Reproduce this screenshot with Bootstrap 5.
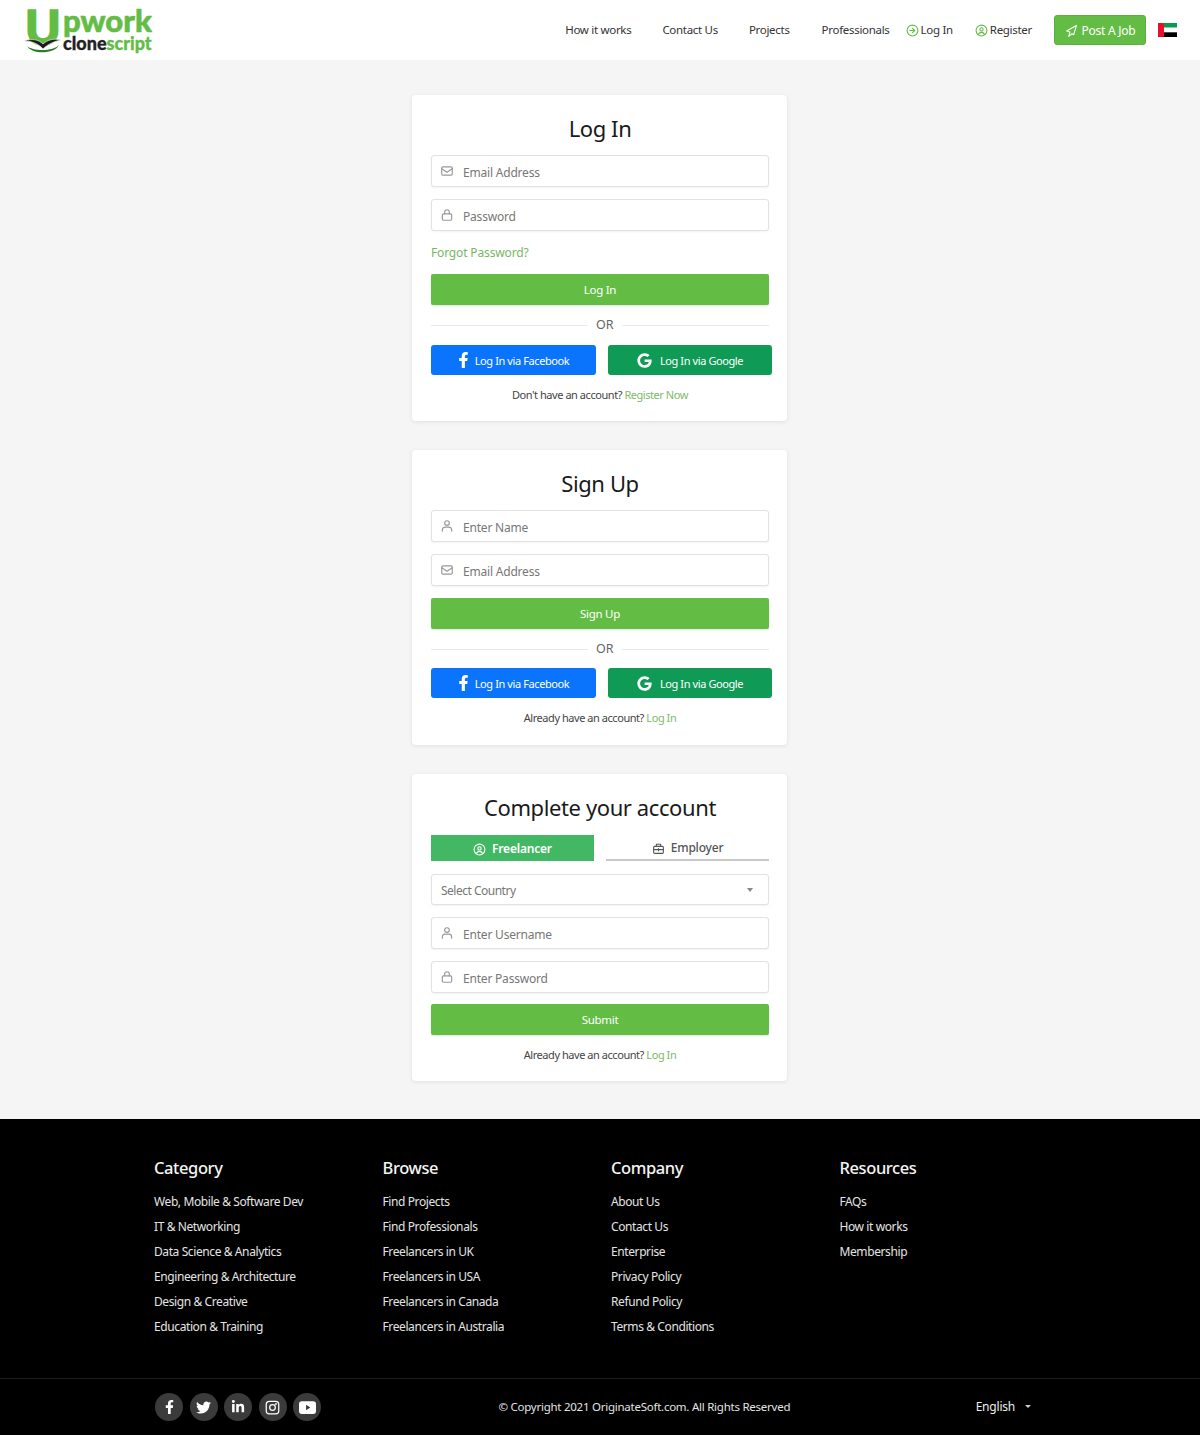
<!DOCTYPE html>
<html lang="en">
<head>
    <meta charset="UTF-8">
    <meta name="viewport" content="width=device-width, initial-scale=1.0">
    <title>Upwork Clone Script</title>
    <link href="https://cdn.jsdelivr.net/npm/bootstrap@5.3.0/dist/css/bootstrap.min.css" rel="stylesheet">
    <style>
        body { background: #f5f5f5; font-family: "Noto Sans", "Liberation Sans", sans-serif; color: #222; }
        svg.ico { fill: none; stroke: currentColor; stroke-width: 2; stroke-linecap: round; stroke-linejoin: round; flex-shrink: 0; }
        svg.solid { fill: currentColor; flex-shrink: 0; }

        /* header */
        .top-bar { height: 60px; background: #fff; padding: 0 23px 0 25px; }
        .brand-box { position: relative; width: 130px; height: 60px; display: block; text-decoration: none; }
        .brand-u { position: absolute; left: 0; top: 6px; font: 900 48px/42px Lato, sans-serif; color: #63bd45; -webkit-text-stroke: 1.5px #63bd45; }
        .brand-work { position: absolute; left: 38px; top: 7px; font: 900 31px/26px Lato, sans-serif; color: #63bd45; -webkit-text-stroke: .6px #63bd45; }
        .brand-clone { position: absolute; left: 38px; top: 34px; font: 900 18px/18px Lato, sans-serif; color: #222; -webkit-text-stroke: .3px #222; }
        .brand-clone em { font-style: normal; color: #63bd45; -webkit-text-stroke-color: #63bd45; }
        .brand-swoosh { position: absolute; left: -1px; top: 38px; }
        .top-links { font-size: 11.5px; letter-spacing: -.3px; color: #333; }
        .top-links a { color: #333; text-decoration: none; }
        .top-links .ico { color: #63bd45; }
        .icon-link-item { gap: 2px; }
        .post-btn { background: #63bd45; border: 1px solid #5bb13f; color: #fff; font-size: 12px; letter-spacing: -.25px; width: 92px; height: 30px; padding: 2px 0 0; border-radius: 3px; margin-left: 22px; margin-right: 12px; }
        .post-btn:hover { background: #63bd45; color: #fff; }

        /* cards */
        .page-main { padding: 35px 0 38px; }
        .form-box { width: 375px; margin: 0 0 29px 412px; background: #fff; border-radius: 4px; padding: 19px 18px 18px 19px; box-shadow: 0 1px 4px rgba(0,0,0,.09); }
        .form-box:last-child { margin-bottom: 0; }
        .form-box h2 { font-size: 22px; font-weight: 400; line-height: 28px; text-align: center; color: #1a1a1a; margin: 0 0 13px; letter-spacing: -.4px; }
        .field-wrap { position: relative; margin-bottom: 12px; }
        .field-wrap.tight { margin-bottom: 11px; }
        .field-wrap .ico { position: absolute; left: 9px; top: 9px; color: #999; }
        .form-control.field-input, .form-select.field-input { height: 32px; min-height: 0; border: 1px solid #e2e2e2; border-radius: 3px; padding: 2px 10px 0 31px; font-size: 12px; letter-spacing: -.2px; box-shadow: 0 1px 2px rgba(0,0,0,.05); }
        .field-input::placeholder { color: #777; opacity: 1; }
        .form-select.field-input { padding-left: 9px; color: #777; background-image: none; height: 31px; letter-spacing: -.5px; }
        .sel-caret { position: absolute; right: 16px; top: 14px; border-left: 3.5px solid transparent; border-right: 3.5px solid transparent; border-top: 4px solid #888; }
        .forgot { display: block; color: #77b765; font-size: 12px; line-height: 18px; margin: 13px 0 12px; text-decoration: none; letter-spacing: -.15px; }
        .green-btn { background: #63bd45; border: 0; color: #fff; height: 31px; padding: 0; width: 100%; font-size: 11.5px; letter-spacing: -.3px; border-radius: 2px; display: block; box-shadow: 0 1px 2px rgba(0,0,0,.12); }
        .green-btn:hover { background: #63bd45; color: #fff; }
        .or-line { display: flex; align-items: center; gap: 8px; color: #666; font-size: 12.5px; line-height: 18px; margin: 11px 0 11px; }
        .or-line.snug { margin-bottom: 10px; }
        .or-line::before, .or-line::after { content: ""; flex: 1; height: 1px; background: #eaeaea; }
        .or-line::before { flex: 0 0 157px; }
        .social-row { display: flex; gap: 12px; width: 342px; }
        .social-btn { flex: 0 0 165px; height: 30px; padding: 0; display: flex; align-items: center; justify-content: center; gap: 8px; color: #fff; border: 0; border-radius: 3px; font-size: 11px; letter-spacing: -.4px; }
        .social-btn span { padding-top: 2px; }
        .social-btn:hover { color: #fff; }
        .fb-btn, .fb-btn:hover { background: #0b74fd; gap: 6px; }
        .gg-btn, .gg-btn:hover { background: #0f9a55; flex-basis: 164px; }
        .small-note { text-align: center; font-size: 11px; letter-spacing: -.45px; line-height: 16px; color: #444; margin: 12px 0 0; }
        .small-note.snug { margin-bottom: 1px; }
        .small-note a { color: #7dbb6a; text-decoration: none; }
        .tab-row { display: flex; gap: 12px; margin: 14px 0 13px; height: 26px; }
        .tab-item { flex: 1; display: flex; align-items: center; justify-content: center; gap: 6px; padding-top: 2px; font-size: 12px; font-weight: 500; letter-spacing: -.2px; text-decoration: none; color: #555; border-bottom: 2px solid #c8c8c8; }
        .tab-item.is-on { background: #43b864; color: #fff; border-bottom: 0; font-weight: 600; }

        /* footer */
        .site-foot { background: #000; height: 316px; color: #eee; }
        .foot-cols { width: 914px; margin-left: 154px; padding-top: 37px; height: 259px; }
        .foot-col { width: 228.5px; flex: none; }
        .foot-col h5 { font-size: 16.5px; font-weight: 500; line-height: 24px; margin: 0 0 9px; color: #f5f5f5; letter-spacing: -.4px; }
        .foot-col a { display: block; color: #e4e4e4; text-decoration: none; font-size: 12px; line-height: 25px; letter-spacing: -.4px; }
        .foot-bottom { border-top: 1px solid #1c1c1c; height: 57px; padding: 0 169px 0 155px; position: relative; }
        .round-ico { width: 28px; height: 28px; border-radius: 50%; background: #3b3b3b; color: #fff; display: flex; align-items: center; justify-content: center; }
        .foot-copy { font-size: 11.5px; letter-spacing: -.25px; color: #e4e4e4; margin-right: 8px; }
        .lang-pick { color: #eee; font-size: 12px; letter-spacing: -.2px; text-decoration: none; }
        .lang-caret { display: inline-block; margin-left: 7px; vertical-align: 3px; border-left: 3px solid transparent; border-right: 3px solid transparent; border-top: 3px solid #ccc; }
    </style>
</head>
<body>
    <svg width="0" height="0" class="position-absolute">
        <symbol id="i-mail" viewBox="0 0 24 24"><rect x="3" y="5" width="18" height="14" rx="2"/><path d="M3 8l9 6 9-6"/></symbol>
        <symbol id="i-lock" viewBox="0 0 24 24"><rect x="4" y="10" width="16" height="11" rx="2"/><path d="M8 10V7a4 4 0 0 1 8 0v3"/></symbol>
        <symbol id="i-user" viewBox="0 0 24 24"><circle cx="12" cy="7" r="4"/><path d="M4 21v-2a5 5 0 0 1 5-5h6a5 5 0 0 1 5 5v2"/></symbol>
        <symbol id="i-face" viewBox="0 0 24 24"><circle cx="12" cy="12" r="10"/><circle cx="12" cy="10" r="3"/><path d="M6.5 19a6 6 0 0 1 11 0"/></symbol>
        <symbol id="i-in" viewBox="0 0 24 24"><circle cx="12" cy="12" r="10"/><path d="M12 8l4 4-4 4M7 12h9"/></symbol>
        <symbol id="i-bag" viewBox="0 0 24 24"><rect x="3" y="8" width="18" height="13" rx="2"/><path d="M8 8V4h8v4M3 14h18M12 12v4"/></symbol>
        <symbol id="i-fb" viewBox="0 0 320 512"><path d="M279.14 288l14.22-92.66h-88.91v-60.13c0-25.35 12.42-50.06 52.24-50.06h40.42V6.26S260.43 0 225.36 0c-73.22 0-121.08 44.38-121.08 124.72v70.62H22.89V288h81.39v224h100.17V288z"/></symbol>
        <symbol id="i-gg" viewBox="0 0 488 512"><path d="M488 261.8C488 403.3 391.1 504 248 504 110.8 504 0 393.2 0 256S110.8 8 248 8c66.8 0 123 24.5 166.3 64.9l-67.5 64.9C258.5 52.6 94.3 116.6 94.3 256c0 86.5 69.1 156.6 153.7 156.6 98.2 0 135-70.4 140.8-106.9H248v-85.3h236.1c2.3 12.7 3.9 24.9 3.9 41.4z"/></symbol>
    </svg>

    <!-- header -->
    <nav class="top-bar d-flex align-items-center">
        <a class="brand-box" href="#">
            <span class="brand-u">U</span>
            <span class="brand-work">pwork</span>
            <span class="brand-clone">clone<em>script</em></span>
            <svg class="brand-swoosh" width="38" height="16" viewBox="0 0 38 16"><path d="M0 3c9-3 15-1 19 3 4-4 11-6 18-4-6 1-13 4-18 9C15 6 8 3 0 3z" fill="#1d1d1d" stroke="#fff" stroke-width=".6"/><path d="M3 8c5 5 26 6 32-1-4 9-27 10-32 1z" fill="#2f7d2a"/></svg>
        </a>
        <div class="top-links d-flex align-items-center ms-auto">
            <a href="#" style="margin-right:31px">How it works</a>
            <a href="#" style="margin-right:31px">Contact Us</a>
            <a href="#" style="margin-right:32px">Projects</a>
            <a href="#" style="margin-right:16px">Professionals</a>
            <a href="#" class="d-flex align-items-center icon-link-item" style="margin-right:22px"><svg class="ico" width="13" height="13"><use href="#i-in"/></svg>Log In</a>
            <a href="#" class="d-flex align-items-center icon-link-item"><svg class="ico" width="13" height="13"><use href="#i-face"/></svg>Register</a>
        </div>
        <a href="#" class="btn post-btn d-flex align-items-center justify-content-center gap-1">
            <svg class="ico" width="13" height="14" viewBox="0 0 24 24"><path d="M21 2L3 12l6 2-2 8 6-5 3 2z"/></svg>Post A Job
        </a>
        <svg width="19" height="14" viewBox="0 0 19 14"><rect width="19" height="4.7" fill="#0a9a4a"/><rect y="4.7" width="19" height="4.6" fill="#fff"/><rect y="9.3" width="19" height="4.7" fill="#000"/><rect width="6" height="14" rx="1" fill="#e8112d"/></svg>
    </nav>

    <main class="page-main">
        <!-- login -->
        <section class="form-box">
            <h2>Log In</h2>
            <div class="field-wrap"><input class="form-control field-input" placeholder="Email Address"><svg class="ico" width="14" height="14"><use href="#i-mail"/></svg></div>
            <div class="field-wrap"><input class="form-control field-input" placeholder="Password"><svg class="ico" width="14" height="14"><use href="#i-lock"/></svg></div>
            <a class="forgot" href="#">Forgot Password?</a>
            <button class="btn green-btn">Log In</button>
            <div class="or-line">OR</div>
            <div class="social-row">
                <a href="#" class="btn social-btn fb-btn"><svg class="solid" width="11" height="16"><use href="#i-fb"/></svg><span>Log In via Facebook</span></a>
                <a href="#" class="btn social-btn gg-btn"><svg class="solid" width="15" height="15"><use href="#i-gg"/></svg><span>Log In via Google</span></a>
            </div>
            <p class="small-note">Don't have an account? <a href="#">Register Now</a></p>
        </section>

        <!-- sign up -->
        <section class="form-box">
            <h2>Sign Up</h2>
            <div class="field-wrap"><input class="form-control field-input" placeholder="Enter Name"><svg class="ico" width="14" height="14"><use href="#i-user"/></svg></div>
            <div class="field-wrap"><input class="form-control field-input" placeholder="Email Address"><svg class="ico" width="14" height="14"><use href="#i-mail"/></svg></div>
            <button class="btn green-btn">Sign Up</button>
            <div class="or-line snug">OR</div>
            <div class="social-row">
                <a href="#" class="btn social-btn fb-btn"><svg class="solid" width="11" height="16"><use href="#i-fb"/></svg><span>Log In via Facebook</span></a>
                <a href="#" class="btn social-btn gg-btn"><svg class="solid" width="15" height="15"><use href="#i-gg"/></svg><span>Log In via Google</span></a>
            </div>
            <p class="small-note snug">Already have an account? <a href="#">Log In</a></p>
        </section>

        <!-- complete account -->
        <section class="form-box">
            <h2>Complete your account</h2>
            <div class="tab-row">
                <a href="#" class="tab-item is-on"><svg class="ico" width="13" height="13"><use href="#i-face"/></svg>Freelancer</a>
                <a href="#" class="tab-item"><svg class="ico" width="13" height="13"><use href="#i-bag"/></svg>Employer</a>
            </div>
            <div class="field-wrap">
                <select class="form-select field-input"><option>Select Country</option></select>
                <span class="sel-caret"></span>
            </div>
            <div class="field-wrap"><input class="form-control field-input" placeholder="Enter Username"><svg class="ico" width="14" height="14"><use href="#i-user"/></svg></div>
            <div class="field-wrap tight"><input class="form-control field-input" placeholder="Enter Password"><svg class="ico" width="14" height="14"><use href="#i-lock"/></svg></div>
            <button class="btn green-btn">Submit</button>
            <p class="small-note">Already have an account? <a href="#">Log In</a></p>
        </section>
    </main>

    <!-- footer -->
    <footer class="site-foot">
        <div class="foot-cols d-flex">
            <div class="foot-col">
                <h5>Category</h5>
                <a href="#">Web, Mobile &amp; Software Dev</a>
                <a href="#">IT &amp; Networking</a>
                <a href="#">Data Science &amp; Analytics</a>
                <a href="#">Engineering &amp; Architecture</a>
                <a href="#">Design &amp; Creative</a>
                <a href="#">Education &amp; Training</a>
            </div>
            <div class="foot-col">
                <h5>Browse</h5>
                <a href="#">Find Projects</a>
                <a href="#">Find Professionals</a>
                <a href="#">Freelancers in UK</a>
                <a href="#">Freelancers in USA</a>
                <a href="#">Freelancers in Canada</a>
                <a href="#">Freelancers in Australia</a>
            </div>
            <div class="foot-col">
                <h5>Company</h5>
                <a href="#">About Us</a>
                <a href="#">Contact Us</a>
                <a href="#">Enterprise</a>
                <a href="#">Privacy Policy</a>
                <a href="#">Refund Policy</a>
                <a href="#">Terms &amp; Conditions</a>
            </div>
            <div class="foot-col">
                <h5>Resources</h5>
                <a href="#">FAQs</a>
                <a href="#">How it works</a>
                <a href="#">Membership</a>
            </div>
        </div>
        <div class="foot-bottom d-flex align-items-center justify-content-between">
            <div class="d-flex" style="gap:6.5px">
                <a href="#" class="round-ico"><svg class="solid" width="9" height="14"><use href="#i-fb"/></svg></a>
                <a href="#" class="round-ico"><svg class="solid" width="15" height="15" viewBox="0 0 512 512"><path d="M459.37 151.716c.325 4.548.325 9.097.325 13.645 0 138.72-105.583 298.558-298.558 298.558-59.452 0-114.68-17.219-161.137-47.106 8.447.974 16.568 1.299 25.34 1.299 49.055 0 94.213-16.568 130.274-44.832-46.132-.975-84.792-31.188-98.112-72.772 6.498.974 12.995 1.624 19.818 1.624 9.421 0 18.843-1.3 27.614-3.573-48.081-9.747-84.143-51.98-84.143-102.985v-1.299c13.969 7.797 30.214 12.67 47.431 13.319-28.264-18.843-46.781-51.005-46.781-87.391 0-19.492 5.197-37.36 14.294-52.954 51.655 63.675 129.3 105.258 216.365 109.807-1.624-7.797-2.599-15.918-2.599-24.04 0-57.828 46.782-104.934 104.934-104.934 30.213 0 57.502 12.67 76.67 33.137 23.715-4.548 46.456-13.32 66.599-25.34-7.798 24.366-24.366 44.833-46.132 57.827 21.117-2.273 41.584-8.122 60.426-16.243-14.292 20.791-32.161 39.308-52.628 54.253z"/></svg></a>
                <a href="#" class="round-ico"><svg class="solid" width="14" height="14" viewBox="0 0 448 512"><path d="M100.28 448H7.4V148.9h92.88zM53.79 108.1C24.09 108.1 0 83.5 0 53.8a53.79 53.79 0 0 1 107.58 0c0 29.7-24.1 54.3-53.79 54.3zM447.9 448h-92.68V302.4c0-34.7-.7-79.2-48.29-79.2-48.29 0-55.69 37.7-55.69 76.7V448h-92.78V148.9h89.08v40.8h1.3c12.4-23.5 42.69-48.3 87.88-48.3 94 0 111.28 61.9 111.28 142.3V448z"/></svg></a>
                <a href="#" class="round-ico"><svg class="ico" width="15" height="15" viewBox="0 0 24 24"><rect x="2" y="2" width="20" height="20" rx="5"/><circle cx="12" cy="12" r="4.5"/><circle cx="17.5" cy="6.5" r=".6"/></svg></a>
                <a href="#" class="round-ico"><svg width="17" height="13" viewBox="0 0 24 18"><path fill-rule="evenodd" fill="#fff" d="M4 0h16a4 4 0 0 1 4 4v10a4 4 0 0 1-4 4H4a4 4 0 0 1-4-4V4a4 4 0 0 1 4-4zm6 5v8l6-4z"/></svg></a>
            </div>
            <div class="foot-copy">© Copyright 2021 OriginateSoft.com. All Rights Reserved</div>
            <a href="#" class="lang-pick">English <span class="lang-caret"></span></a>
        </div>
    </footer>

    <script src="https://cdn.jsdelivr.net/npm/bootstrap@5.3.0/dist/js/bootstrap.bundle.min.js"></script>
</body>
</html>
